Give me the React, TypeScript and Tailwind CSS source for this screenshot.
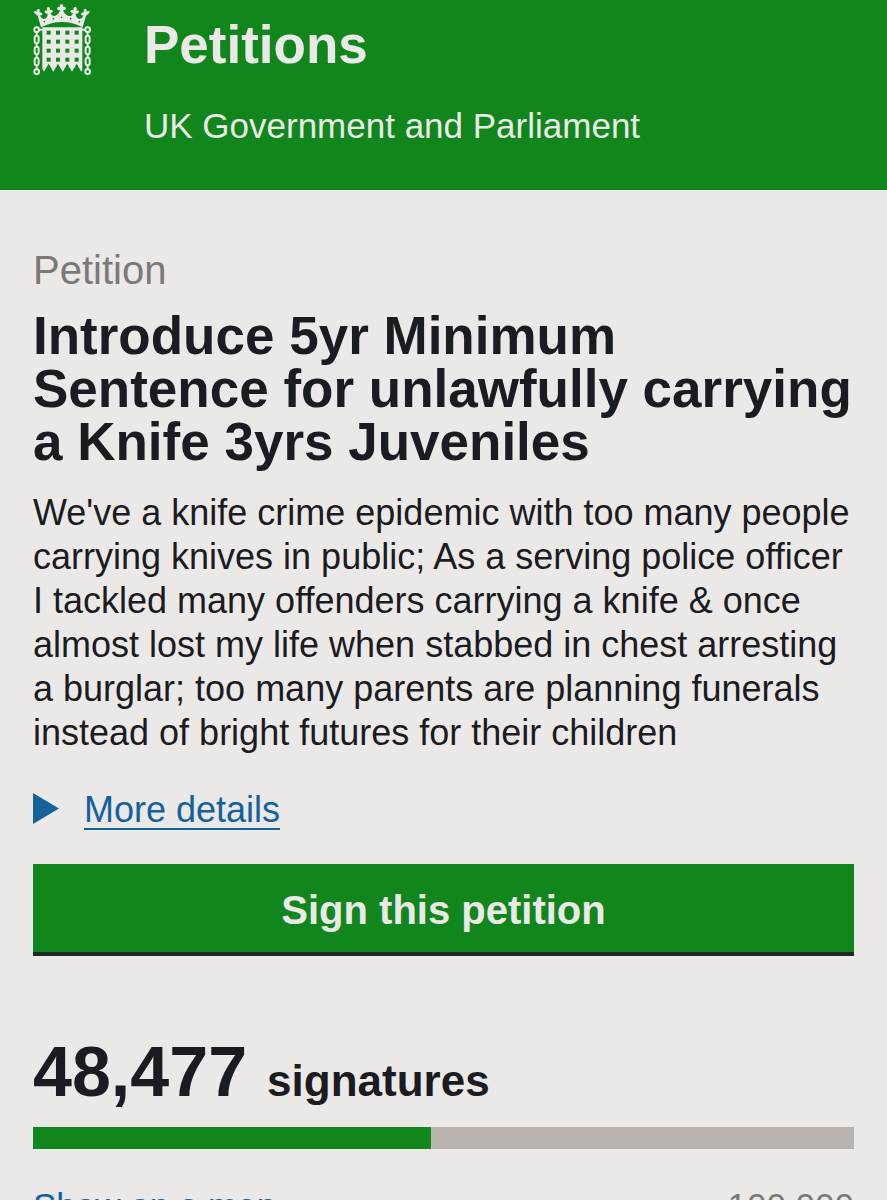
import { useState } from "react";

const signatures = 48477;
const target = 100000;

const gridRows = [94, 121, 148, 175];
const gridColumns = [79, 107, 135, 163];
const chainSides = [49, 202];

function Portcullis() {
  return (
    <svg viewBox="38 2 177 225" className="h-[75px] w-[59px] shrink-0" role="img" aria-label="Parliament portcullis">
      <g fill="#ebe9e7">
        <path d="M62 84 L52 49 Q45 45 40 37 Q46 32 49 38 Q49 28 55 29 Q61 31 57 39 Q66 38 66 45 Q63 50 58 48 Q62 58 70 59 Q82 57 82 43 Q74 44 73 37 Q74 31 81 34 Q77 24 84 23 Q91 24 88 32 Q97 29 98 36 Q96 42 90 41 Q94 52 103 50 Q116 46 119 32 Q110 34 110 27 Q112 20 119 23 Q116 15 123 15 Q131 15 128 23 Q136 20 137 27 Q136 34 128 32 Q132 46 145 50 Q155 52 158 41 Q151 42 150 36 Q152 29 160 32 Q157 24 165 23 Q172 24 168 34 Q175 31 176 37 Q174 44 166 43 Q167 57 178 59 Q186 58 190 48 Q184 50 182 45 Q182 38 191 39 Q188 31 194 29 Q200 28 199 38 Q204 32 209 37 Q204 45 197 49 L187 84 Q125 52 62 84 Z" />
        <path d="M66 84 H186 V212 L183 217 L169 193 L155 217 L141 193 L127 217 L113 193 L99 217 L85 193 L71 217 L66 208 Z" />
      </g>
      <g fill="#10861c">
        {gridRows.flatMap((y) =>
          gridColumns.map((x) => <rect key={`${x}-${y}`} x={x} y={y} width="12" height="12" />),
        )}
        <circle cx="72" cy="67" r="2.5" />
        <circle cx="99" cy="58" r="2.5" />
        <circle cx="124" cy="54" r="2.5" />
        <circle cx="151" cy="58" r="2.5" />
        <circle cx="177" cy="67" r="2.5" />
      </g>
      <g fill="none" stroke="#ebe9e7" strokeWidth="6">
        {chainSides.map((x) => (
          <g key={x}>
            <circle cx={x} cy="91" r="7" />
            <rect x={x - 6} y="109" width="12" height="23" rx="6" />
            <rect x={x - 6} y="142" width="12" height="23" rx="6" />
            <rect x={x - 6} y="175" width="12" height="23" rx="6" />
            <circle cx={x} cy="217" r="7" />
            <path d={`M${x} 98 V112 M${x} 129 V145 M${x} 162 V178 M${x} 195 V211`} />
          </g>
        ))}
        <path d="M56 91 H68 M182 91 H195" />
      </g>
    </svg>
  );
}

export default function App() {
  const [open, setOpen] = useState(false);

  return (
    <div className="min-h-screen bg-[#ebe9e7] font-['Liberation_Sans',Arial,sans-serif] text-[#1b1b22]">
      <header className="flex items-start gap-[52px] bg-[#10861c] px-[33px] pb-[42px] text-[#ebe9e7]">
        <Portcullis />
        <div className="pt-[15px]">
          <a href="#home" className="block text-[53px] leading-[60px] font-bold">Petitions</a>
          <p className="mt-[29px] text-[35px] leading-[44px]">UK Government and Parliament</p>
        </div>
      </header>
      <main className="px-[33px] pt-[56px] pb-8">
        <h1>
          <span className="block text-[40px] leading-[48px] text-[#7b7977]">Petition</span>
          <span className="mt-[15px] block text-[53px] leading-[53px] font-bold">
            Introduce 5yr Minimum<br />Sentence for unlawfully carrying<br />a Knife 3yrs Juveniles
          </span>
        </h1>
        <p className="mt-[23px] text-[36px] leading-[44px]">
          We've a knife crime epidemic with too many people<br />
          carrying knives in public; As a serving police officer<br />
          I tackled many offenders carrying a knife &amp; once<br />
          almost lost my life when stabbed in chest arresting<br />
          a burglar; too many parents are planning funerals<br />
          instead of bright futures for their children
        </p>
        <button
          type="button"
          aria-expanded={open}
          onClick={() => setOpen(!open)}
          className="mt-[32px] flex items-start gap-[25px] text-[#13629c]"
        >
          <svg viewBox="0 0 26 31" className="mt-[6px] h-[31px] w-[26px]" aria-hidden="true">
            <path d="M0 0 L26 15.5 L0 31 Z" fill="currentColor" />
          </svg>
          <span className="mt-[5px] border-b-2 border-current text-[36px] leading-[36px]">More details</span>
        </button>
        <button
          type="button"
          className="mt-[34px] block w-full border-b-4 border-[#1b2a22] bg-[#10861c] pt-[22px] pb-[18px] text-[40px] leading-[48px] font-bold text-[#ebe9e7]"
        >
          Sign this petition
        </button>
        <p className="mt-[76px] flex items-baseline gap-[20px] font-bold">
          <span className="text-[70px] leading-[80px]">{signatures.toLocaleString("en-GB")}</span>
          <span className="text-[44px] leading-[53px]">signatures</span>
        </p>
        <div
          role="progressbar"
          aria-label="Signatures"
          aria-valuenow={signatures}
          aria-valuemax={target}
          className="mt-[15px] h-[22px] bg-[#bab4b0]"
        >
          <div className="h-full bg-[#10861c]" style={{ width: `${(signatures / target) * 100}%` }} />
        </div>
        <div className="mt-[35px] flex justify-between text-[35px] leading-[44px]">
          <a href="#map" className="text-[#13629c] underline underline-offset-4">Show on a map</a>
          <span className="text-[#7b7977]">{target.toLocaleString("en-GB")}</span>
        </div>
      </main>
    </div>
  );
}
